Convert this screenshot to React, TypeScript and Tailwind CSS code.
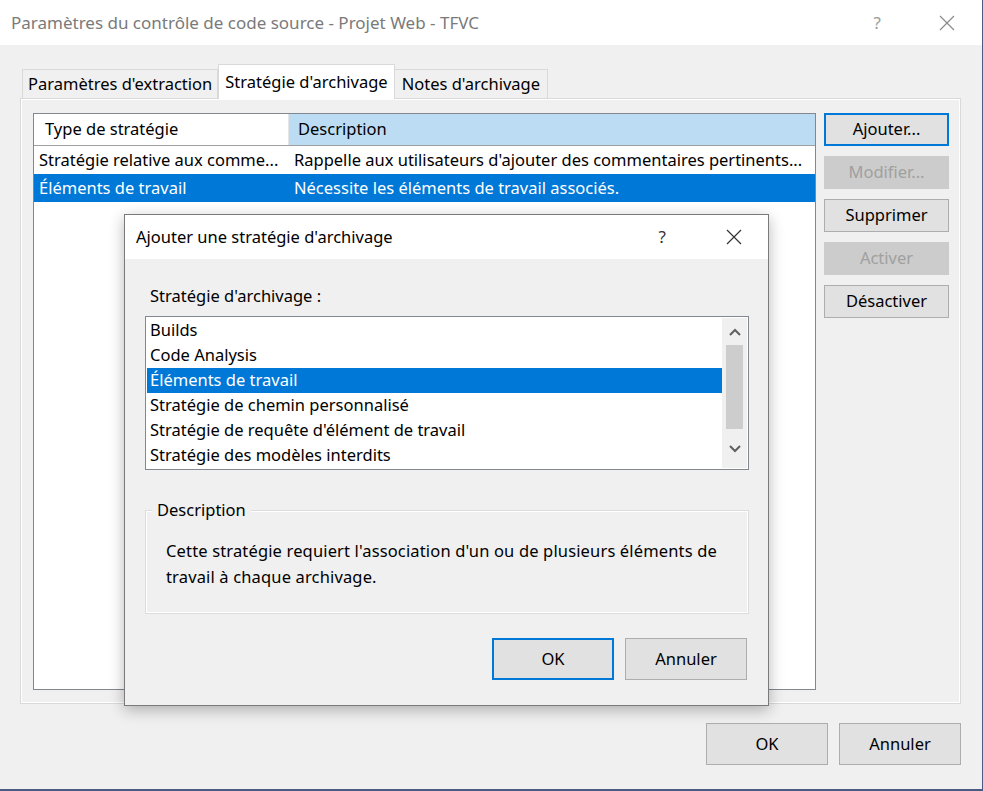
import React from "react";

const font = { fontFamily: '"Noto Sans", "Segoe UI", sans-serif' };

function CloseIcon({ color = "#000" }: { color?: string }) {
  return (
    <svg width="16" height="16" viewBox="0 0 16 16">
      <path d="M1 1 L15 15 M15 1 L1 15" stroke={color} strokeWidth="1.2" fill="none" />
    </svg>
  );
}

function Btn({ children, primary, disabled, className = "" }: { children: React.ReactNode; primary?: boolean; disabled?: boolean; className?: string }) {
  const base = "flex items-center justify-center text-[16.5px] ";
  const cls = disabled
    ? "bg-[#cccccc] border border-[#cccccc] text-[#a0a0a0]"
    : primary
    ? "bg-[#e1e1e1] border-2 border-[#0078d7] text-black"
    : "bg-[#e1e1e1] border border-[#adadad] text-black";
  return <div className={base + cls + " " + className}>{children}</div>;
}

export default function App() {
  const modalItems = [
    "Builds",
    "Code Analysis",
    "Éléments de travail",
    "Stratégie de chemin personnalisé",
    "Stratégie de requête d'élément de travail",
    "Stratégie des modèles interdits",
  ];
  return (
    <div style={font} className="relative w-[983px] h-[791px] bg-[#f0f0f0] border-r border-b-2 border-[#4a5a82] overflow-hidden">
      {/* Title bar */}
      <div className="h-[45px] bg-white flex items-center pl-[11px] pr-[27px]">
        <span className="text-[17px] text-[#7a7a7a] flex-1">Paramètres du contrôle de code source - Projet Web - TFVC</span>
        <span className="text-[17px] text-[#9a9a9a] mr-[58px]">?</span>
        <CloseIcon color="#8a8a8a" />
      </div>

      {/* Tabs */}
      <div className="pl-[20px] pr-[21px] pt-[19px]">
        <div className="flex items-end h-[34px]">
          <div className="h-[29px] ml-[2px] px-[5px] border border-b-0 border-[#d9d9d9] bg-[#f0f0f0] flex items-center text-[16.5px] text-black">Paramètres d'extraction</div>
          <div className="h-[35px] -mb-[1px] px-[6px] border border-b-0 border-[#d9d9d9] bg-white flex items-center text-[16.5px] text-black relative z-10">Stratégie d'archivage</div>
          <div className="h-[29px] px-[7px] border border-b-0 border-l-0 border-[#d9d9d9] bg-[#f0f0f0] flex items-center text-[16.5px] text-black">Notes d'archivage</div>
        </div>
        {/* Tab panel */}
        <div className="h-[606px] border border-[#d9d9d9] bg-[#f0f0f0] shadow-[inset_0_0_0_1px_#ffffff] pt-[14px] pl-[12px] flex gap-[8px]">
          {/* List view */}
          <div className="w-[783px] h-[577px] border border-[#828790] bg-white">
            <div className="flex h-[32px] border-b border-[#a0a0a0] text-[16.5px]">
              <div className="w-[255px] flex items-center pl-[11px] bg-white border-r border-[#e5e5e5]">Type de stratégie</div>
              <div className="flex-1 flex items-center pl-[9px] bg-[#bcdcf4]">Description</div>
            </div>
            <div className="flex h-[28px] items-center text-[16.5px] text-black">
              <div className="w-[255px] pl-[5px] whitespace-nowrap">Stratégie relative aux comme...</div>
              <div className="flex-1 pl-[5px] whitespace-nowrap">Rappelle aux utilisateurs d'ajouter des commentaires pertinents...</div>
            </div>
            <div className="flex h-[28px] items-center text-[16.5px] text-white bg-[#0078d7]">
              <div className="w-[255px] pl-[5px] whitespace-nowrap">Éléments de travail</div>
              <div className="flex-1 pl-[5px] whitespace-nowrap">Nécessite les éléments de travail associés.</div>
            </div>
          </div>
          {/* Buttons */}
          <div className="flex flex-col gap-[10px] w-[125px]">
            <Btn primary className="h-[33px]">Ajouter...</Btn>
            <Btn disabled className="h-[33px]">Modifier...</Btn>
            <Btn className="h-[33px]">Supprimer</Btn>
            <Btn disabled className="h-[33px]">Activer</Btn>
            <Btn className="h-[33px]">Désactiver</Btn>
          </div>
        </div>
        {/* Bottom buttons */}
        <div className="flex justify-end gap-[11px] mt-[19px] pr-[0px]">
          <Btn className="w-[122px] h-[42px]">OK</Btn>
          <Btn className="w-[122px] h-[42px]">Annuler</Btn>
        </div>
      </div>

      {/* Modal */}
      <div className="absolute left-[124px] top-[214px] w-[645px] h-[492px] bg-[#f0f0f0] border border-[#7a7a7a] shadow-[0_4px_14px_rgba(0,0,0,0.28)] flex flex-col">
        <div className="h-[44px] bg-white flex items-center pl-[11px] pr-[26px]">
          <span className="flex-1 text-[16.5px] text-black">Ajouter une stratégie d'archivage</span>
          <span className="text-[17px] text-[#333] mr-[60px]">?</span>
          <CloseIcon color="#333" />
        </div>
        <div className="px-[20px] pt-[26px]">
          <div className="text-[16.5px] text-black pl-[5px] h-[22px] leading-[22px]">Stratégie d'archivage :</div>
          <div className="mt-[9px] w-[604px] h-[154px] border border-[#828790] bg-white flex p-[1px]">
            <div className="flex-1 flex flex-col">
              {modalItems.map((it, i) => (
                <div key={it} className={"h-[25px] flex items-center pl-[3px] text-[16.5px] whitespace-nowrap " + (i === 2 ? "bg-[#0078d7] text-white" : "text-black")}>
                  {it}
                </div>
              ))}
            </div>
            <div className="w-[25px] bg-[#f0f0f0] flex flex-col items-center">
              <div className="h-[27px] flex items-center justify-center">
                <svg width="12" height="8" viewBox="0 0 12 8"><path d="M1 7 L6 2 L11 7" stroke="#606060" strokeWidth="2" fill="none" /></svg>
              </div>
              <div className="w-[17px] h-[84px] bg-[#cdcdcd]" />
              <div className="flex-1 flex items-center justify-center">
                <svg width="12" height="8" viewBox="0 0 12 8"><path d="M1 1 L6 6 L11 1" stroke="#606060" strokeWidth="2" fill="none" /></svg>
              </div>
            </div>
          </div>
          {/* Group box */}
          <div className="relative mt-[40px] w-[604px] h-[104px] border border-[#dcdcdc] shadow-[inset_0_0_0_1px_#ffffff]">
            <div className="absolute -top-[12px] left-[6px] px-[5px] bg-[#f0f0f0] text-[16.5px] text-black leading-[22px]">Description</div>
            <div className="pt-[27px] pl-[20px] pr-[20px] text-[16.5px] leading-[26px] text-black tracking-[0.15px]">
              Cette stratégie requiert l'association d'un ou de plusieurs éléments de travail à chaque archivage.
            </div>
          </div>
          <div className="flex justify-end gap-[11px] mt-[24px] pr-[1px]">
            <Btn primary className="w-[122px] h-[42px]">OK</Btn>
            <Btn className="w-[122px] h-[42px]">Annuler</Btn>
          </div>
        </div>
      </div>
    </div>
  );
}
